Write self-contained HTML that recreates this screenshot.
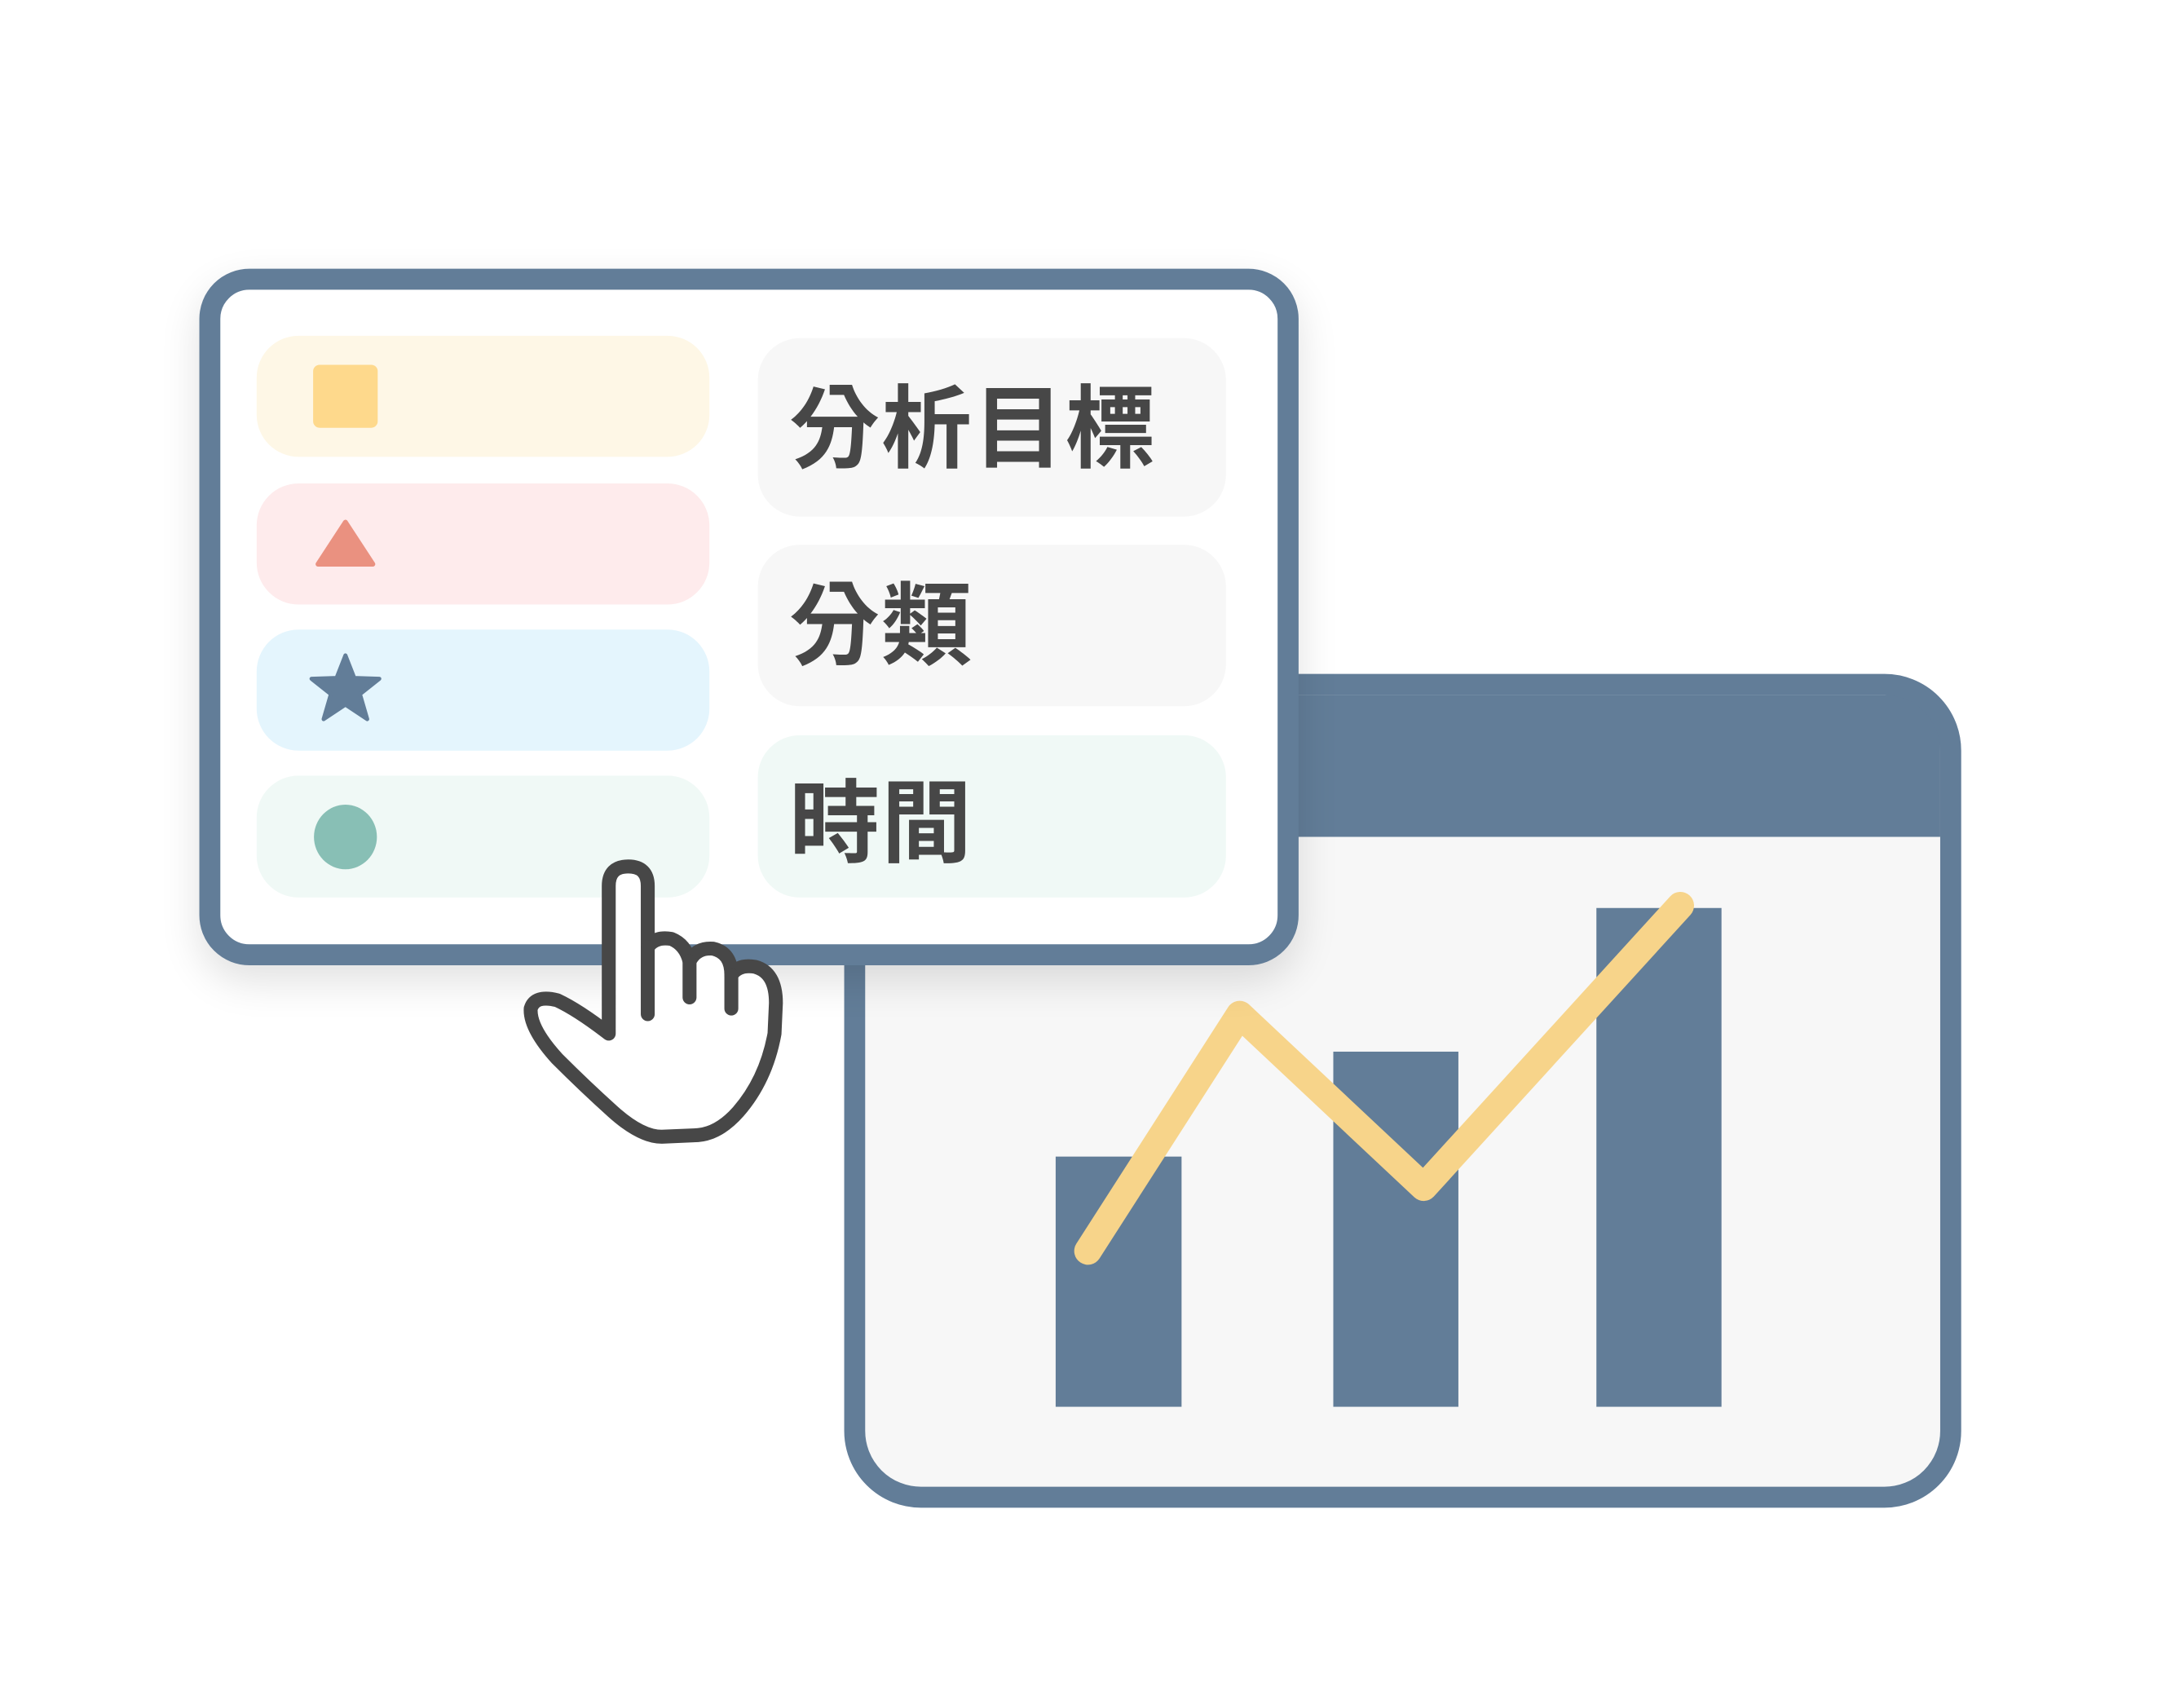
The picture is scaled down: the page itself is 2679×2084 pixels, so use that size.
<!DOCTYPE html>
<html><head><meta charset="utf-8"><style>
html,body{margin:0;padding:0;background:#fff;}
body{width:2679px;height:2084px;position:relative;overflow:hidden;font-family:"Liberation Sans","Noto Sans CJK TC",sans-serif;}
#wrap{position:absolute;left:0;top:0;width:2679px;height:2084px;transform:scale(0.99);transform-origin:0 0;}
.abs{position:absolute;box-sizing:border-box;}
.back{left:1046px;top:835px;width:1384px;height:1033px;border:26px solid #627d98;border-radius:95px;background:linear-gradient(#627d98 0,#627d98 176px,#f7f7f7 176px);}
.front{left:247px;top:333px;width:1362px;height:863px;border:26px solid #627d98;border-radius:62px;background:#fff;box-shadow:0 20px 50px rgba(0,0,0,0.12);}
.pill{border-radius:52px;}
.txt{color:#474747;font-weight:bold;font-size:112px;line-height:1;font-family:"Noto Sans CJK TC","Noto Sans CJK JP",sans-serif;letter-spacing:2px;}
</style></head><body><div id="wrap">
<div class="abs back"></div>
<svg class="abs" style="left:0;top:0" width="2679" height="2084">
<rect x="1308" y="1433" width="156" height="310" fill="#627d98"/>
<rect x="1652" y="1303" width="155" height="440" fill="#627d98"/>
<rect x="1978" y="1125" width="155" height="618" fill="#627d98"/>
<polyline points="1348,1550 1536,1257 1764,1471 2082,1122" fill="none" stroke="#f7d48a" stroke-width="34" stroke-linecap="round" stroke-linejoin="round"/>
</svg>
<div class="abs front"></div>
<div class="abs pill" style="left:318px;top:416px;width:561px;height:150px;background:#fef7e6"></div>
<div class="abs pill" style="left:318px;top:599px;width:561px;height:150px;background:#feebec"></div>
<div class="abs pill" style="left:318px;top:780px;width:561px;height:150px;background:#e4f5fd"></div>
<div class="abs pill" style="left:318px;top:961px;width:561px;height:151px;background:#f0f9f6"></div>
<div class="abs pill" style="left:939px;top:419px;width:580px;height:221px;background:#f7f7f7"></div>
<div class="abs pill" style="left:939px;top:675px;width:580px;height:200px;background:#f7f7f7"></div>
<div class="abs pill" style="left:939px;top:911px;width:580px;height:201px;background:#f0f9f6"></div>
<div class="abs txt" style="left:978px;top:466px;">分析目標</div>
<div class="abs txt" style="left:978px;top:710px;">分類</div>
<div class="abs txt" style="left:978px;top:955px;">時間</div>
<svg class="abs" style="left:0;top:0" width="2679" height="2084">
<rect x="388" y="452" width="80" height="78" rx="8" fill="#fed98c"/>
<path d="M428,647 L462,699 L394,699 Z" fill="#ea9180" stroke="#ea9180" stroke-width="6" stroke-linejoin="round"/>
<path d="M428,812 L439,840 L470,841 L446,860 L455,891 L428,873 L401,891 L410,860 L386,841 L417,840 Z" fill="#627d98" stroke="#627d98" stroke-width="5" stroke-linejoin="round"/>
<ellipse cx="428" cy="1037" rx="39" ry="40" fill="#88bfb5"/>
<g transform="scale(1.726)" fill="none" stroke="#474747" stroke-width="10" stroke-linejoin="round" stroke-linecap="round">
<path fill="#fff" d="M437,742 L437,636 Q437,622 451,622 Q465,622 465,636 L465,680 Q470,672 482,674 Q492,678 495,690 Q500,680 512,681 Q525,684 525,700 Q530,692 542,694 Q557,698 557,720 L556,742 Q550,775 530,798 Q515,815 498,815 L475,816 Q460,816 440,798 Q420,780 400,760 Q380,738 381,724 Q384,714 400,718 Q415,725 437,742 Z"/>
<path d="M465,680 L465,728 M495,690 L495,716 M525,700 L525,724"/>
</g>
</svg>
</div></body></html>
